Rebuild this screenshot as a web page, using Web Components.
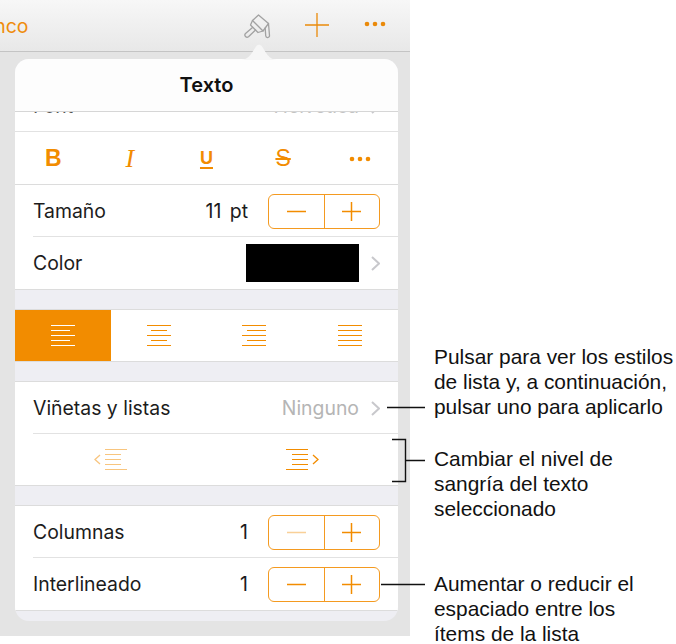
<!DOCTYPE html>
<html lang="es"><head><meta charset="utf-8"><title>Texto</title>
<style>
html,body{margin:0;padding:0;background:#fff;height:644px;overflow:hidden}
body{font-family:Inter,"Liberation Sans",sans-serif;color:#111}
#page{display:grid;grid-template-columns:410px 266px;height:644px;position:relative}
</style></head><body>
<div id="page">
<x-pane>
  <x-popover>
    <x-row clip>Font</x-row>
    <x-style-row></x-style-row>
    <x-row label="Tamaño" value="11 pt" border="inset"><x-stepper></x-stepper></x-row>
    <x-row label="Color" border="full" tall><x-swatch></x-swatch><x-chev></x-chev></x-row>
    <x-gap></x-gap>
    <x-align-row></x-align-row>
    <x-gap></x-gap>
    <x-row label="Viñetas y listas" muted="Ninguno" border="inset"><x-chev></x-chev></x-row>
    <x-indent-row></x-indent-row>
    <x-gap></x-gap>
    <x-row label="Columnas" value="1" border="inset"><x-stepper dim></x-stepper></x-row>
    <x-row label="Interlineado" value="1" border="full" tall><x-stepper></x-stepper></x-row>
  </x-popover>
</x-pane>
<x-notes>
  <x-note top="344">Pulsar para ver los estilos<br>de lista y, a continuación,<br>pulsar uno para aplicarlo</x-note>
  <x-note top="27">Cambiar el nivel de<br>sangría del texto<br>seleccionado</x-note>
  <x-note top="50">Aumentar o reducir el<br>espaciado entre los<br>ítems de la lista</x-note>
</x-notes>
<x-leaders></x-leaders>
</div>
<script>
const O='#f28c00';
function def(name,css,html,init){
  customElements.define(name,class extends HTMLElement{
    constructor(){super();this.attachShadow({mode:'open'});}
    connectedCallback(){
      const h=typeof html==='function'?html(this):html;
      this.shadowRoot.innerHTML='<style>'+css+'</style>'+h;
      if(init)init(this);
    }
  });
}
def('x-pane',`:host{display:flex;flex-direction:column;width:410px;height:636px;background:#e4e4e4;position:relative}
.bar{height:51px;flex:none;border-bottom:1px solid #c4c4c4;background:linear-gradient(#f7f7f7,#e8e8e8);position:relative;overflow:hidden;display:flex;align-items:center}
.back{color:#ef8c0c;font-size:19.400px;margin-left:-34px;width:60px;text-align:right;margin-top:0;white-space:nowrap}
.tools{margin-left:auto;display:flex;align-items:center}
svg{display:block}
.wrap{padding:7px 12px 15px 15px;flex:1;min-height:0;display:flex}
.tip{position:absolute;left:241px;top:43px}`,
`<div class="bar"><div class="back">Blanco</div>
<div class="tools">
<svg width="28" height="26" viewBox="0 0 28 26" fill="none" stroke="#a2a2a2" stroke-width="1.300" stroke-linejoin="round" stroke-linecap="round" style="margin-top:3px;margin-right:34px"><path d="M9.500 6.500 15.500 1 25.500 9.500 20 17Z"/><path d="M9.500 6.500 7.500 11 15 18.500 20 17"/><path d="M9.500 13.500 2.500 19.500a2.200 2.200 0 0 0 3 3.200L12.500 16"/><path d="M25.500 9.500 26.500 21.500a1.900 1.900 0 0 1-3.800.300L22.200 14"/></svg>
<svg width="24" height="24" viewBox="0 0 24 24" stroke="#ea8a0a" stroke-width="1.300" style="margin-top:-2px;margin-right:35px"><path d="M0 12H24M12 0V24"/></svg>
<svg width="22" height="6" viewBox="0 0 22 6" fill="#ea8a0a" style="margin-top:-4px;margin-right:24px"><circle cx="3" cy="3" r="2.300"/><circle cx="11" cy="3" r="2.300"/><circle cx="19" cy="3" r="2.300"/></svg>
</div></div>
<svg class="tip" width="36" height="17" viewBox="0 0 36 17"><path d="M0 17C8 17 12 8 15 3.500 16.500 1 19.500 1 21 3.500 24 8 28 17 36 17Z" fill="#f6f6f6"/></svg>
<div class="wrap"><slot></slot></div>`);
def('x-popover',`:host{display:flex;flex-direction:column;width:383px;height:562px;background:#eeeef3;border-radius:14px;overflow:hidden}
.title{height:52px;flex:none;background:#fdfdfd;border-bottom:1px solid #d6d6d6;display:flex;align-items:center;justify-content:center;font-weight:600;font-size:20px;color:#111;box-sizing:content-box}`,
`<div class="title">Texto</div><slot></slot>`);
def('x-row',`:host{display:flex;align-items:center;background:#fff;flex:none;height:52px;padding:0 18px;box-sizing:border-box;font-size:19.400px;color:#1c1c1c;position:relative;white-space:nowrap;overflow:hidden}
:host([tall]){height:53px}
:host([border=full]){border-bottom:1px solid #dcdcdc}
:host([border=inset])::after{content:"";position:absolute;left:18px;right:0;bottom:0;height:1px;background:#e2e2e2}
.l{flex:1}.v{margin-right:20px;word-spacing:3px}.m{color:#b5b5b5;margin-right:12px}
.clip{height:22px;width:100%;display:flex;align-items:center;color:#555;margin-top:-17px;line-height:22px;flex:none}
.clip span{flex:1}
.clip i{font-style:normal;color:#c4c4c4;margin-right:12px}
:host([clip]){height:20px;border-bottom:1px solid #e2e2e2;align-items:flex-start}`,
t=>{
  if(t.hasAttribute('clip')) return `<div class="clip"><span>Font</span><i>Helvetica</i><x-chev></x-chev></div>`;
  const a=n=>t.getAttribute(n);
  return `<span class="l">${a('label')}</span>`+(a('value')?`<span class="v">${a('value')}</span>`:'')+(a('muted')?`<span class="m">${a('muted')}</span>`:'')+`<slot></slot>`;
});
def('x-style-row',`:host{display:grid;grid-template-columns:repeat(5,1fr);height:52px;background:#fff;border-bottom:1px solid #dcdcdc;flex:none;color:${O}}
div{display:flex;align-items:center;justify-content:center;padding-top:1px}
.b{font:700 23px "Liberation Sans",sans-serif}
.i{font:italic 400 26px "Liberation Serif",serif}
.u{font:700 18px "Liberation Sans",sans-serif;text-decoration:underline;text-decoration-thickness:2px;text-underline-offset:3px}
.s{font:400 23px "Liberation Sans",sans-serif;text-decoration:line-through;text-decoration-thickness:1.500px}`,
`<div class="b">B</div><div class="i">I</div><div class="u">U</div><div class="s">S</div>
<div><svg width="22" height="6" viewBox="0 0 22 6" fill="${O}"><circle cx="3" cy="3" r="2.300"/><circle cx="11" cy="3" r="2.300"/><circle cx="19" cy="3" r="2.300"/></svg></div>`);
def('x-stepper',`:host{display:flex;width:112px;height:35px;box-sizing:border-box;border:1px solid #f49a20;border-radius:6px;flex:none}
div{flex:1;display:flex;align-items:center;justify-content:center}
div+div{border-left:1px solid #f49a20}
:host([dim]) .m{opacity:.4}`,
`<div><svg class="m" width="19" height="19" viewBox="0 0 19 19" stroke="${O}" stroke-width="1.500"><path d="M0 9.500H19"/></svg></div>
<div><svg width="19" height="19" viewBox="0 0 19 19" stroke="${O}" stroke-width="1.500"><path d="M0 9.500H19M9.500 0V19"/></svg></div>`);
def('x-swatch',`:host{display:block;width:113px;height:38px;background:#000;margin-right:12px;flex:none}`,'');
def('x-chev',`:host{display:block;flex:none;width:9px;height:15px}svg{display:block}`,
`<svg width="9" height="15" viewBox="0 0 9 15" fill="none" stroke="#c8c8cc" stroke-width="2"><path d="M1 1 8 7.500 1 14"/></svg>`);
def('x-gap',`:host{display:block;height:19px;flex:none;border-bottom:1px solid #dcdcdc;background:#eeeef3}`,'');
const lines=(kind,col)=>{
  const spec={left:[[0,24],[0,19],[0,24],[0,19],[0,24]],center:[[0,24],[4,16],[0,24],[4,16],[0,24]],right:[[0,24],[5,19],[0,24],[5,19],[0,24]],just:[[0,24],[0,24],[0,24],[0,24],[0,24]]}[kind];
  return `<svg width="24" height="21" viewBox="0 0 24 21" stroke="${col}" stroke-width="1">`+spec.map((s,i)=>`<path d="M${s[0]} ${.5+i*5}h${s[1]}"/>`).join('')+`</svg>`;
};
def('x-align-row',`:host{display:grid;grid-template-columns:repeat(4,1fr);height:51px;background:#fff;border-bottom:1px solid #dcdcdc;flex:none}
div{display:flex;align-items:center;justify-content:center}
.on{background:${O}}svg{display:block}`,
`<div class="on">${lines('left','#fff')}</div><div>${lines('center',O)}</div><div>${lines('right',O)}</div><div>${lines('just',O)}</div>`);
def('x-indent-row',`:host{display:grid;grid-template-columns:1fr 1fr;height:51px;background:#fff;border-bottom:1px solid #dcdcdc;flex:none}
div{display:flex;align-items:center;justify-content:center}
.off{opacity:.5}svg{display:block}`,
`<div><svg class="off" width="33" height="21" viewBox="0 0 33 21" fill="none" stroke="${O}" stroke-width="1"><path d="M11 .5h22M11 5.500h16M11 10.500h16M11 15.500h16M11 20.500h22"/><path d="M6 6 1 10.500 6 15" stroke-width="1.300"/></svg></div>
<div><svg width="33" height="21" viewBox="0 0 33 21" fill="none" stroke="${O}" stroke-width="1"><path d="M0 .5h22M6 5.500h16M6 10.500h16M6 15.500h16M0 20.500h22"/><path d="M27 6 32 10.500 27 15" stroke-width="1.300"/></svg></div>`);
def('x-notes',`:host{display:flex;flex-direction:column;padding-left:24px;font:20.900px/25px "Liberation Sans",sans-serif;color:#111}`,`<slot></slot>`);
def('x-note',`:host{display:block;white-space:nowrap}`,`<slot></slot>`,t=>{t.style.marginTop=t.getAttribute('top')+'px'});
def('x-leaders',`:host{position:absolute;left:0;top:0}svg{display:block}`,
`<svg width="676" height="644" fill="none" stroke="#111" stroke-width="1.400"><path d="M387 407.500H425M392 439.500H405.500V481.500H392M405.500 460.500H425M381 584.500H425"/></svg>`);
</script>
</body></html>
